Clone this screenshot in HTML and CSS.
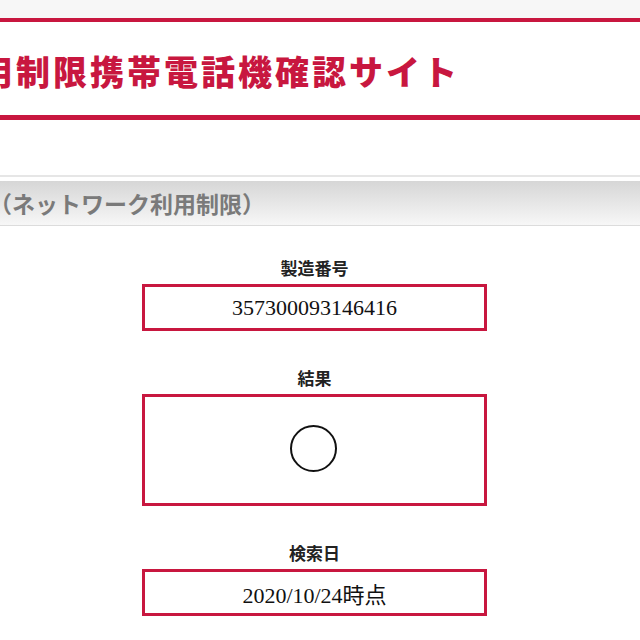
FILE: index.html
```html
<!DOCTYPE html>
<html lang="ja">
<head>
  <meta charset="UTF-8" />
  <meta name="viewport" content="width=device-width, initial-scale=1" />
  <title>ネットワーク利用制限携帯電話機確認サイト</title>
  <link rel="stylesheet" href="styles.css">
</head>
<body>
  <div class="top-strip"></div>
  <header class="site-header">
    <h1 class="site-title">用制限携帯電話機確認サイト</h1>
  </header>

  <div class="section-bar">
    <h2 class="section-title">（ネットワーク利用制限）</h2>
  </div>

  <main class="result">
    <div class="field">
      <div class="field-label">製造番号</div>
      <div class="field-box">357300093146416</div>
    </div>
    <div class="field">
      <div class="field-label">結果</div>
      <div class="field-box field-box-tall">
        <span class="mark"></span>
      </div>
    </div>
    <div class="field">
      <div class="field-label">検索日</div>
      <div class="field-box">2020/10/24時点</div>
    </div>
  </main>
</body>
</html>
```

FILE: styles.css
```css
body { margin: 0; background: #fff; font-family: "Noto Sans CJK JP", sans-serif; overflow: hidden; }
.top-strip { height: 18px; background: #f7f7f7; }
.site-header { border-top: 4px solid #c8173f; border-bottom: 5px solid #c8173f; height: 93px; display: flex; align-items: center; background: #fff; }
.site-title { margin: 0 0 0 -21px; font-size: 34px; font-weight: 900; color: #c8173f; letter-spacing: 3px; white-space: nowrap; line-height: 1; padding-top: 4px; }
.section-bar { margin-top: 55px; border-top: 2px solid #e6e6e6; padding-top: 4px; }
.section-title { margin: 0 0 0 -11px; height: 45px; box-sizing: border-box; border-bottom: 1px solid #dcdcdc; background: linear-gradient(#d6d6d6, #f7f7f7); font-size: 23px; font-weight: 700; color: #7a7a7a; line-height: 44px; white-space: nowrap; }
.result { width: 345px; margin-left: 142px; padding-top: 32px; display: flex; flex-direction: column; gap: 37px; }
.field { display: flex; flex-direction: column; align-items: center; gap: 6px; }
.field-label { font-size: 17px; font-weight: 700; color: #222; line-height: 20px; }
.field-box { width: 100%; box-sizing: border-box; height: 47px; border: 3px solid #c8173f; display: flex; align-items: center; justify-content: center; font-family: "Liberation Serif", "Noto Sans CJK JP", serif; font-size: 22px; color: #111; }
.field-box-tall { height: 112px; }
.mark { width: 43px; height: 43px; border: 2px solid #111; border-radius: 50%; margin-right: 3px; margin-top: -4px; }
```
